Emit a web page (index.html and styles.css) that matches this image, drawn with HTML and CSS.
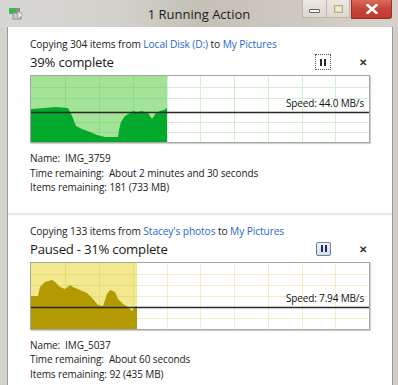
FILE: index.html
```html
<!DOCTYPE html>
<html>
<head>
<meta charset="utf-8">
<link rel="stylesheet" href="styles.css">
</head>
<body>
<div class="window">
  <div class="titlebar">
    <div class="tb-left">
      <svg class="app-icon" width="16" height="14" viewBox="0 0 16 14">
        <rect x="1" y="1" width="11" height="6" fill="#8a8a8a"/>
        <rect x="1.5" y="1.5" width="6" height="5" fill="#27c23a"/>
        <rect x="5" y="6" width="8" height="6" fill="#c9c9c9" stroke="#8f8f8f" stroke-width="1"/>
        <path d="M10 4 L15 8 L10 12 Z" fill="#ededed" stroke="#9a9a9a" stroke-width="0.8"/>
      </svg>
    </div>
    <div class="title">1 Running Action</div>
    <div class="tb-right">
      <div class="wbtn wmin"><span class="min-glyph"></span></div>
      <div class="wbtn wmax"><span class="max-glyph"></span></div>
      <div class="wbtn wclose">
        <svg width="12" height="10" viewBox="0 0 12 10"><path d="M1.5 1 L10.5 9 M10.5 1 L1.5 9" stroke="#fff" stroke-width="2.6" stroke-linecap="square"/></svg>
      </div>
    </div>
  </div>
  <div class="frame">
    <div class="content">
      <section class="item">
        <div class="from">Copying 304 items from <span class="link">Local Disk (D:)</span> to <span class="link">My Pictures</span></div>
        <div class="status">
          <span class="heading">39% complete</span>
          <span class="pause focus"><i></i><i></i></span>
          <span class="cancel">&#x2715;</span>
        </div>
        <div class="graph">
          <svg width="338" height="66" viewBox="0 0 338 66">
            <rect x="0" y="0" width="136" height="66" fill="#a3e398"/>
            <g stroke="#d3f1d2" stroke-width="1">
              <path d="M34.5 0V66 M68.5 0V66 M102.5 0V66 M136.5 0V66 M169.5 0V66 M203.5 0V66 M237.5 0V66 M271.5 0V66 M304.5 0V66"/>
              <path d="M0 11.5H338 M0 22.5H338 M0 46.5H338 M0 56.5H338"/>
            </g>
            <g stroke="#8ed985" stroke-width="1">
              <path d="M34.5 0V66 M68.5 0V66 M102.5 0V66"/>
              <path d="M0 11.5H136 M0 22.5H136 M0 46.5H136 M0 56.5H136"/>
            </g>
            <path d="M0 33 L14 32 L24 31 L37 32 L41 40 L45 50 L51 53 L59 56 L66 59 L74 61 L81 61 L87 61 L88 54 L90 46 L94 40 L99 37 L102 35 L106 36 L111 35 L117 37 L121 43 L125 37 L129 35 L133 34 L136 32 L136 66 L0 66 Z" fill="#02a92b"/>
            <path d="M0 36.5H338" stroke="#2a2a2a" stroke-width="1.4"/>
          </svg>
          <span class="speed speed1">Speed: 44.0 MB/s</span>
        </div>
        <div class="details">
          <div>Name:&nbsp; IMG_3759</div>
          <div>Time remaining:&nbsp; About 2 minutes and 30 seconds</div>
          <div>Items remaining: 181 (733 MB)</div>
        </div>
      </section>
      <div class="sep"></div>
      <section class="item">
        <div class="from">Copying 133 items from <span class="link">Stacey's photos</span> to <span class="link">My Pictures</span></div>
        <div class="status">
          <span class="heading">Paused - 31% complete</span>
          <span class="pause paused"><i></i><i></i></span>
          <span class="cancel">&#x2715;</span>
        </div>
        <div class="graph">
          <svg width="338" height="66" viewBox="0 0 338 66">
            <rect x="0" y="0" width="106" height="66" fill="#f2e98f"/>
            <g stroke="#f4efc8" stroke-width="1">
              <path d="M34.5 0V66 M68.5 0V66 M102.5 0V66 M136.5 0V66 M169.5 0V66 M203.5 0V66 M237.5 0V66 M271.5 0V66 M304.5 0V66"/>
              <path d="M0 11.5H338 M0 22.5H338 M0 33.5H338 M0 55.5H338"/>
            </g>
            <g stroke="#e6da7a" stroke-width="1">
              <path d="M34.5 0V66 M68.5 0V66 M102.5 0V66"/>
              <path d="M0 11.5H106 M0 22.5H106 M0 33.5H106 M0 55.5H106"/>
            </g>
            <path d="M0 33 L7 33 L9 24 L14 19 L21 17 L24 19 L29 24 L34 26 L39 22 L42 24 L49 27 L56 30 L62 36 L67 42 L72 43 L76 31 L79 27 L84 29 L87 36 L92 41 L97 44 L101 48 L104 44 L106 43 L106 66 L0 66 Z" fill="#b29a00"/>
            <path d="M0 44.5H338" stroke="#2a2a2a" stroke-width="1.4"/>
          </svg>
          <span class="speed speed2">Speed: 7.94 MB/s</span>
        </div>
        <div class="details">
          <div>Name:&nbsp; IMG_5037</div>
          <div>Time remaining:&nbsp; About 60 seconds</div>
          <div>Items remaining: 92 (435 MB)</div>
        </div>
      </section>
    </div>
  </div>
</div>
</body>
</html>
```

FILE: styles.css
```css
html, body {
  margin: 0;
  padding: 0;
}
body {
  width: 398px;
  height: 385px;
  overflow: hidden;
  font-family: "Open Sans", "Noto Sans", sans-serif;
  color: #1b1b1b;
}
.window {
  width: 398px;
  height: 385px;
  display: flex;
  flex-direction: column;
  background: linear-gradient(90deg, #d3d1cc 0%, #cfcdc7 40%, #c9c5bc 60%, #d2cec6 100%);
}
.titlebar {
  height: 27px;
  display: grid;
  grid-template-columns: 1fr auto 1fr;
  align-items: center;
  background: linear-gradient(90deg, #d8d7d3 0%, #d3d1cc 30%, #c4c0b6 50%, #ccc8c0 70%, #d6d2ca 100%);
}
.tb-left {
  display: flex;
  align-items: center;
  padding-left: 8px;
  padding-top: 1px;
}
.app-icon { display: block; }
.title {
  font-size: 13px;
  color: #1d1d1d;
  padding-top: 1px;
}
.tb-right {
  align-self: start;
  justify-self: end;
  display: flex;
  margin-right: 6px;
}
.wbtn {
  height: 19px;
  display: flex;
  align-items: center;
  justify-content: center;
  box-sizing: border-box;
}
.wmin, .wmax {
  width: 24px;
  height: 18px;
  background: linear-gradient(#ebe8e1, #dcd8cf);
  border: 1px solid #bcb8ae;
  border-top: none;
}
.wmin { border-right: none; border-radius: 0 0 0 3px; }
.wmax { width: 24px; }
.min-glyph {
  width: 9px;
  height: 2px;
  margin-top: 4px;
  border: 1px solid #5e6066;
  background: #fff;
  border-radius: 1px;
}
.max-glyph {
  width: 7px;
  height: 6px;
  border: 1px solid #b7ae86;
  background: #f3edc9;
  box-shadow: inset 0 0 0 1px #e0d7a9;
}
.wclose {
  width: 41px;
  margin-left: 1px;
  background: linear-gradient(#d86a5c, #c8443a 50%, #bd3a30);
  border: 1px solid #9c2f28;
  border-top: none;
  border-radius: 0 0 3px 0;
}
.frame {
  flex: 1;
  display: flex;
  padding: 0 5px 0 7px;
}
.content {
  flex: 1;
  background: #fff;
  border-left: 1px solid #9a9a98;
  border-right: 1px solid #9a9a98;
  display: flex;
  flex-direction: column;
}
.item {
  padding: 10px 22px 0 22px;
}
.item + .sep + .item {
  padding-top: 9px;
}
.from {
  font-size: 10.2px;
  letter-spacing: -0.1px;
  line-height: 15px;
  white-space: nowrap;
}
.link { color: #1f68cf; }
.status {
  display: flex;
  align-items: center;
  height: 20px;
}
.heading {
  font-size: 13.2px;
  letter-spacing: -0.25px;
  flex: 1;
  color: #1a1a1a;
}
.pause {
  width: 16px;
  height: 16px;
  box-sizing: border-box;
  display: flex;
  align-items: center;
  justify-content: center;
  gap: 2px;
}
.pause i {
  display: block;
  width: 2px;
  height: 7px;
  background: #2a2a2a;
}
.pause.focus {
  border: 1px dotted #555;
}
.pause.paused {
  width: 15px;
  height: 14px;
  border: 1px solid #6e7f9b;
  border-radius: 2px;
  background: linear-gradient(#f2f5fa, #d2dcea);
}
.pause.paused i { background: #1c2f60; width: 2px; height: 7px; }
.cancel {
  width: 14px;
  margin: 0 0 0 25px;
  font-size: 10px;
  color: #333;
  text-align: center;
  font-weight: bold;
}
.graph {
  position: relative;
  width: 338px;
  height: 66px;
  margin-top: 3px;
  border: 1px solid #a5a5a5;
  box-shadow: 1px 1px 1px rgba(0,0,0,0.18);
}
.graph svg { display: block; }
.speed {
  position: absolute;
  right: 5px;
  font-size: 10px;
  letter-spacing: -0.15px;
  line-height: 13px;
  color: #111;
  text-shadow: 0 0 2px #fff, 0 0 2px #fff;
  white-space: nowrap;
}
.speed1 { top: 21px; }
.speed2 { top: 29px; }
.details {
  margin-top: 8px;
  font-size: 10px;
  letter-spacing: -0.1px;
  line-height: 14.5px;
  white-space: nowrap;
}
.sep {
  height: 2px;
  margin-top: 18px;
  background: #e6e6e6;
}
```
